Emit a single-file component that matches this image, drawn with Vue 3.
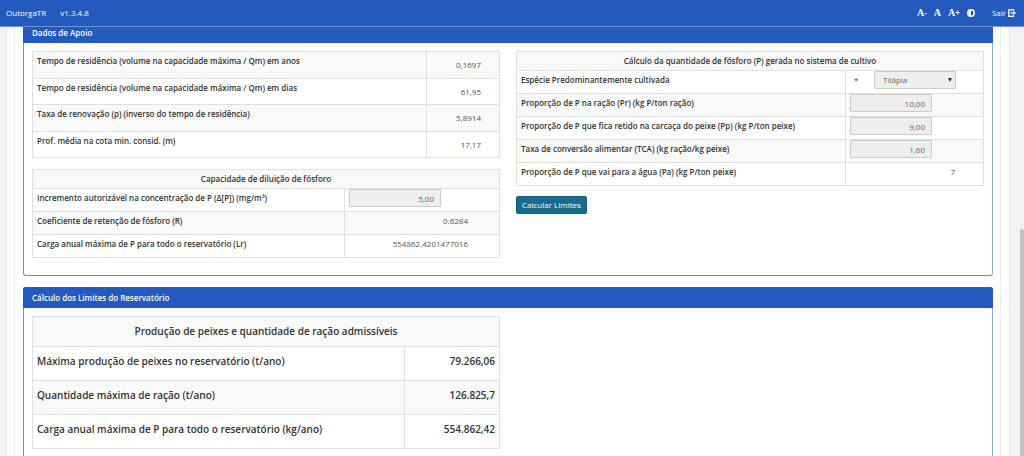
<script setup>
import { ref } from 'vue'

const residence = [
  { label: 'Tempo de residência (volume na capacidade máxima / Qm) em anos', value: '0,1697' },
  { label: 'Tempo de residência (volume na capacidade máxima / Qm) em dias', value: '61,95' },
  { label: 'Taxa de renovação (ρ) (inverso do tempo de residência)', value: '5,8914' },
  { label: 'Prof. média na cota min. consid. (m)', value: '17,17' },
]
const increment = ref('5,00')
const species = ref('Tilápia')
const proportions = ref([
  { id: 'pr', label: 'Proporção de P na ração (Pr) (kg P/ton ração)', value: '10,00' },
  { id: 'pp', label: 'Proporção de P que fica retido na carcaça do peixe (Pp) (kg P/ton peixe)', value: '9,00' },
  { id: 'tca', label: 'Taxa de conversão alimentar (TCA) (kg ração/kg peixe)', value: '1,60' },
])
const limits = [
  { label: 'Máxima produção de peixes no reservatório (t/ano)', value: '79.266,06' },
  { label: 'Quantidade máxima de ração (t/ano)', value: '126.825,7' },
  { label: 'Carga anual máxima de P para todo o reservatório (kg/ano)', value: '554.862,42' },
]
</script>

<template>
  <div class="app">
    <header class="topbar">
      <a href="#" class="brand">OutorgaTR</a>
      <span class="version">v1.3.4.8</span>
      <nav class="tools">
        <button type="button" class="tool" aria-label="Diminuir fonte"><b>A</b>-</button>
        <button type="button" class="tool" aria-label="Fonte normal"><b>A</b></button>
        <button type="button" class="tool" aria-label="Aumentar fonte"><b>A</b>+</button>
        <button type="button" class="tool" aria-label="Contraste">
          <svg width="8" height="8" viewBox="0 0 16 16">
            <circle cx="8" cy="8" r="6.5" fill="none" stroke="#fff" stroke-width="3" />
            <path d="M8 2a6 6 0 0 0 0 12z" fill="#fff" />
          </svg>
        </button>
        <a href="#" class="exit">Sair
          <svg width="8" height="8" viewBox="0 0 16 16" fill="none" stroke="#fff" stroke-width="2.5">
            <path d="M11 4V1.500H1.500v13H11V12" />
            <path d="M5 8h8" />
            <path d="M11 4l5 4-5 4z" fill="#fff" stroke="none" />
          </svg>
        </a>
      </nav>
    </header>

    <div class="viewport">
      <main class="content">
        <section class="panel support">
          <h2>Dados de Apoio</h2>
          <div class="columns">
            <div class="column">
              <table class="residence">
                <tbody>
                  <tr v-for="row in residence" :key="row.label">
                    <th scope="row">{{ row.label }}</th>
                    <td>{{ row.value }}</td>
                  </tr>
                </tbody>
              </table>

              <table class="dilution">
                <colgroup><col><col class="value-col"></colgroup>
                <thead>
                  <tr><th colspan="2" scope="col">Capacidade de diluição de fósforo</th></tr>
                </thead>
                <tbody>
                  <tr>
                    <th scope="row"><label for="increment">Incremento autorizável na concentração de P (Δ[P]) (mg/m³)</label></th>
                    <td class="field"><input id="increment" v-model="increment" type="text" disabled></td>
                  </tr>
                  <tr>
                    <th scope="row">Coeficiente de retenção de fósforo (R)</th>
                    <td>0.6284</td>
                  </tr>
                  <tr>
                    <th scope="row">Carga anual máxima de P para todo o reservatório (Lr)</th>
                    <td>554862.4201477016</td>
                  </tr>
                </tbody>
              </table>
            </div>

            <div class="column">
              <table class="phosphorus">
                <colgroup><col><col class="value-col"></colgroup>
                <thead>
                  <tr><th colspan="2" scope="col">Cálculo da quantidade de fósforo (P) gerada no sistema de cultivo</th></tr>
                </thead>
                <tbody>
                  <tr>
                    <th scope="row"><label for="species">Espécie Predominantemente cultivada</label></th>
                    <td class="field">
                      <div class="required">
                        <span class="star">*</span>
                        <span class="select">
                          <select id="species" v-model="species" disabled>
                            <option>Tilápia</option>
                          </select>
                          <svg class="arrow" width="4" height="4" viewBox="0 0 4 4"><path d="M0 0h4L2 4z" fill="#333" /></svg>
                        </span>
                      </div>
                    </td>
                  </tr>
                  <tr v-for="row in proportions" :key="row.id">
                    <th scope="row"><label :for="row.id">{{ row.label }}</label></th>
                    <td class="field"><input :id="row.id" v-model="row.value" type="text" disabled></td>
                  </tr>
                  <tr>
                    <th scope="row">Proporção de P que vai para a água (Pa) (kg P/ton peixe)</th>
                    <td>7</td>
                  </tr>
                </tbody>
              </table>
              <button type="button" class="calculate">Calcular Limites</button>
            </div>
          </div>
        </section>

        <section class="panel">
          <h2>Cálculo dos Limites do Reservatório</h2>
          <div class="columns">
            <div class="column">
              <table class="limits">
                <colgroup><col><col class="value-col"></colgroup>
                <thead>
                  <tr><th colspan="2" scope="col">Produção de peixes e quantidade de ração admissíveis</th></tr>
                </thead>
                <tbody>
                  <tr v-for="row in limits" :key="row.label">
                    <th scope="row">{{ row.label }}</th>
                    <td>{{ row.value }}</td>
                  </tr>
                </tbody>
              </table>
            </div>
            <div class="column"></div>
          </div>
        </section>
      </main>
      <div class="scroll"></div>
    </div>
  </div>
</template>

<style>
body {
  margin: 0;
}
</style>

<style scoped>
.app {
  display: flex;
  flex-direction: column;
  height: 100vh;
  overflow: hidden;
  background: #f1f2f6;
  color: #333;
  font: 8px/10px "Open Sans", sans-serif;
}
.topbar {
  position: relative;
  z-index: 1;
  display: flex;
  align-items: center;
  flex: none;
  height: 27px;
  box-sizing: border-box;
  padding: 0 8px 0 6px;
  border-bottom: 1px solid #6f93d8;
  background: #2459bd;
  color: #fff;
}
.topbar a {
  color: #fff;
  text-decoration: none;
}
.version {
  margin-left: 14px;
}
.tools {
  display: flex;
  align-items: center;
  gap: 7px;
  margin-left: auto;
}
.tool {
  display: flex;
  align-items: center;
  padding: 0;
  border: 0;
  background: none;
  color: #fff;
  font: 600 8px/10px "Open Sans", sans-serif;
}
.tool b {
  font: bold 10px/10px "Liberation Serif", serif;
}
.exit {
  display: flex;
  align-items: center;
  gap: 2px;
  margin-left: 10px;
}
.viewport {
  display: flex;
  flex: 1;
  min-height: 0;
}
.content {
  flex: 1;
  display: flex;
  flex-direction: column;
  gap: 11px;
  margin: -5px 10px 0 6px;
  padding: 0 16px;
  border: solid #e6e9f0;
  border-width: 0 1px;
  background: linear-gradient(#e9ecf1, #e9ecf1) 7px 0 / 1px 100% no-repeat,
    linear-gradient(#e9ecf1, #e9ecf1) right 8px top 0 / 1px 100% no-repeat, #fff;
}
.scroll {
  width: 4px;
  margin-top: 202px;
  border-radius: 2px 2px 0 0;
  background: #c1c1c5;
}
.panel {
  border: 1px solid #5e97b8;
  border-right-color: #8db3c6;
  border-radius: 3px;
  background: #fff;
}
.panel:last-child {
  flex: 1;
}
.support {
  flex: none;
}
h2 {
  margin: -1px -1px 0;
  padding: 6px 9px 5px;
  border-radius: 3px 3px 0 0;
  background: #2459bd;
  color: #fff;
  font-size: 8px;
  line-height: 10px;
  font-weight: 600;
}
.columns {
  display: grid;
  grid-template-columns: 1fr 1fr;
  gap: 16px;
  padding: 8px;
}
.support .columns {
  padding-bottom: 17px;
}
table {
  width: 100%;
  table-layout: fixed;
  border-collapse: collapse;
}
th,
td {
  box-sizing: border-box;
  padding: 4px;
  border: 1px solid #e0e0e0;
  vertical-align: top;
}
th {
  font-weight: 600;
  text-align: left;
}
td {
  color: #555;
  text-align: right;
}
thead th {
  text-align: center;
}
thead tr,
.residence tr:nth-child(odd),
tbody tr:nth-child(even) {
  background: #f9f9f9;
}
.residence tr:nth-child(even) {
  background: #fff;
}
.residence th {
  height: 26px;
}
.residence tr:nth-child(odd) th {
  height: 27px;
}
.residence td {
  width: 73px;
  padding: 8px 18px 0 4px;
}
.dilution {
  margin-top: 11px;
}
.dilution .value-col {
  width: 155px;
}
.dilution td {
  padding-right: 31px;
}
.dilution tbody tr,
.phosphorus tbody tr {
  height: 23px;
}
.phosphorus .value-col {
  width: 138px;
}
.phosphorus td {
  padding-right: 28px;
}
.dilution .field,
.phosphorus .field {
  padding: 0 4px;
  text-align: left;
}
input,
select {
  display: block;
  box-sizing: border-box;
  width: 82px;
  height: 18px;
  padding: 0 6px;
  border: 1px solid #ccc;
  border-radius: 1px;
  background: #eee;
  color: #666;
  font: 8px/10px "Open Sans", sans-serif;
  text-align: right;
  opacity: 1;
}
#increment {
  width: 92px;
}
.required {
  display: flex;
}
.star {
  width: 24px;
  padding: 4px 0 0 4px;
  box-sizing: border-box;
  color: #c00;
}
.select {
  position: relative;
}
select {
  appearance: none;
  padding: 0 8px;
  text-align: left;
}
.arrow {
  position: absolute;
  top: 7px;
  right: 4px;
}
.calculate {
  display: block;
  margin-top: 10px;
  padding: 3px 5px;
  border: 1px solid #15607f;
  border-radius: 2px;
  background: #1a6a8d;
  color: #fff;
  font: 8px/10px "Open Sans", sans-serif;
}
.limits th,
.limits td {
  height: 34px;
  padding: 7px 4px;
  color: #333;
  font-size: 10px;
  line-height: 14px;
  font-weight: 600;
}
.limits thead th {
  height: 30px;
}
.limits .value-col {
  width: 95px;
}
</style>
